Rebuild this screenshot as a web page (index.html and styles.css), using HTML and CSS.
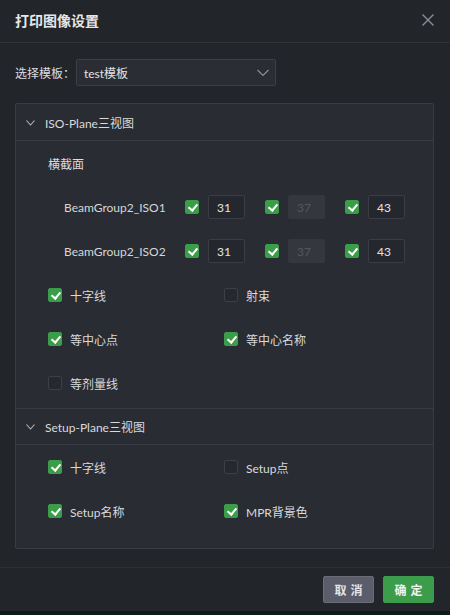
FILE: index.html
```html
<!DOCTYPE html>
<html lang="zh">
<head>
<meta charset="utf-8">
<link rel="stylesheet" href="styles.css">
</head>
<body>
<div class="dialog">
  <div class="header">
    <span class="title">打印图像设置</span>
    <svg class="close" width="12" height="12" viewBox="0 0 12 12"><path d="M0.5 0.5L11.5 11.5M11.5 0.5L0.5 11.5" stroke="#8b8e94" stroke-width="1.4" fill="none"/></svg>
  </div>
  <div class="body">
    <div class="tpl-row">
      <span class="tpl-label">选择模板：</span>
      <div class="select">
        <span>test模板</span>
        <svg width="12" height="8" viewBox="0 0 12 8"><path d="M0.5 1L6 6.5L11.5 1" stroke="#8b8e94" stroke-width="1.2" fill="none"/></svg>
      </div>
    </div>
    <div class="panel">
      <div class="sec-head">
        <svg class="chev" width="9" height="6" viewBox="0 0 9 6"><path d="M0.5 0.5L4.5 5L8.5 0.5" stroke="#b4b6ba" stroke-width="1.1" fill="none"/></svg>
        <span>ISO-Plane三视图</span>
      </div>
      <div class="sec-body">
        <div class="row sub">横截面</div>
        <div class="row beam">
          <span class="beam-name">BeamGroup2_ISO1</span>
          <div class="grp"><i class="cb on"></i><span class="inp">31</span></div>
          <div class="grp"><i class="cb on"></i><span class="inp dis">37</span></div>
          <div class="grp"><i class="cb on"></i><span class="inp">43</span></div>
        </div>
        <div class="row beam">
          <span class="beam-name">BeamGroup2_ISO2</span>
          <div class="grp"><i class="cb on"></i><span class="inp">31</span></div>
          <div class="grp"><i class="cb on"></i><span class="inp dis">37</span></div>
          <div class="grp"><i class="cb on"></i><span class="inp">43</span></div>
        </div>
        <div class="row opts">
          <label class="opt"><i class="cb on"></i>十字线</label>
          <label class="opt"><i class="cb"></i>射束</label>
        </div>
        <div class="row opts">
          <label class="opt"><i class="cb on"></i>等中心点</label>
          <label class="opt"><i class="cb on"></i>等中心名称</label>
        </div>
        <div class="row opts">
          <label class="opt"><i class="cb"></i>等剂量线</label>
        </div>
      </div>
      <div class="sec-head top">
        <svg class="chev" width="9" height="6" viewBox="0 0 9 6"><path d="M0.5 0.5L4.5 5L8.5 0.5" stroke="#b4b6ba" stroke-width="1.1" fill="none"/></svg>
        <span>Setup-Plane三视图</span>
      </div>
      <div class="sec-body last">
        <div class="row opts">
          <label class="opt"><i class="cb on"></i>十字线</label>
          <label class="opt"><i class="cb"></i>Setup点</label>
        </div>
        <div class="row opts">
          <label class="opt"><i class="cb on"></i>Setup名称</label>
          <label class="opt"><i class="cb on"></i>MPR背景色</label>
        </div>
      </div>
    </div>
  </div>
  <div class="footer">
    <button class="btn cancel">取消</button>
    <button class="btn ok">确定</button>
  </div>
</div>
</body>
</html>
```
FILE: styles.css
```css
* { box-sizing: border-box; }
html, body { margin: 0; padding: 0; }
body {
  width: 450px;
  height: 615px;
  background: #0f1c16;
  font-family: Lato, "Noto Sans CJK SC", sans-serif;
  font-size: 12px;
  color: #d9dadc;
  overflow: hidden;
}
.dialog {
  height: 611px;
  background: #22252a;
  display: flex;
  flex-direction: column;
}
.header {
  height: 43px;
  border-bottom: 1px solid #303338;
  display: flex;
  align-items: center;
  justify-content: space-between;
  padding: 0 16px 2px 15px;
}
.title {
  font-size: 14px;
  font-weight: bold;
  color: #e6e7e9;
  font-family: "Noto Sans CJK SC", sans-serif;
}
.close { display: block; }
.body {
  padding: 16px 16px 0 15px;
  flex: 1;
}
.tpl-row {
  display: flex;
  align-items: center;
  height: 27px;
}
.tpl-label {
  width: 61px;
  font-family: "Noto Sans CJK SC", sans-serif;
  color: #dcdde0;
}
.select {
  width: 200px;
  height: 27px;
  background: #2a2d33;
  border: 1px solid #3c3f45;
  border-radius: 2px;
  display: flex;
  align-items: center;
  justify-content: space-between;
  padding: 0 6px 0 7px;
  color: #e3e4e6;
}
.select svg { display: block; margin-top: 1px; }
.panel {
  margin-top: 17px;
  border: 1px solid #393c42;
  border-radius: 2px;
  background: #292c33;
}
.sec-head {
  height: 37px;
  border-bottom: 1px solid #393c42;
  display: flex;
  align-items: center;
  padding-left: 10px;
  color: #d9dadc;
}
.sec-head.top { border-top: 1px solid #393c42; }
.chev { display: block; margin-right: 10px; margin-top: 1px; }
.sec-body { padding-bottom: 3px; }
.sec-body.last { padding-bottom: 15px; }
.row {
  height: 44px;
  display: flex;
  align-items: center;
}
.sub {
  padding-left: 32px;
  font-family: "Noto Sans CJK SC", sans-serif;
  color: #dcdde0;
}
.beam { padding-left: 48px; }
.beam-name { width: 121px; color: #d6d7d9; }
.grp {
  display: flex;
  align-items: center;
  gap: 9px;
  width: 80px;
}
.cb {
  display: inline-block;
  width: 14px;
  height: 14px;
  border: 1px solid #3c3f46;
  border-radius: 2px;
  background: #25282e;
  flex: none;
  position: relative;
}
.cb.on {
  background: #3b9d4a;
  border-color: #3b9d4a;
}
.cb.on::after {
  content: "";
  position: absolute;
  left: 3.5px;
  top: 1px;
  width: 4px;
  height: 7px;
  border: solid #fff;
  border-width: 0 2px 2px 0;
  transform: rotate(40deg);
}
.inp {
  width: 37px;
  height: 24px;
  border: 1px solid #3a3d43;
  border-radius: 2px;
  background: #24272d;
  display: flex;
  align-items: center;
  padding-left: 8px;
  color: #e2e3e5;
  font-size: 12px;
}
.inp.dis {
  background: #34373d;
  border-color: #34373d;
  color: #54575d;
}
.opts { padding-left: 32px; }
.opt {
  width: 176px;
  display: flex;
  align-items: center;
  gap: 8px;
  color: #d9dadc;
}
.footer {
  height: 44px;
  border-top: 1px solid #322f34;
  display: flex;
  justify-content: flex-end;
  align-items: flex-start;
  gap: 9px;
  padding: 8px 16px 0 0;
}
.btn {
  width: 51px;
  height: 27px;
  border-radius: 2px;
  font-family: "Noto Sans CJK SC", sans-serif;
  font-size: 12px;
  font-weight: bold;
  letter-spacing: 4px;
  padding: 0 0 0 4px;
  color: #eeeeee;
  cursor: pointer;
}
.cancel {
  background: #5b5d6a;
  border: 1px solid #6a6c78;
  color: #e4e4e8;
}
.ok {
  background: #3b9d4b;
  border: 1px solid #3b9d4b;
  color: #f2f2f2;
}
```
